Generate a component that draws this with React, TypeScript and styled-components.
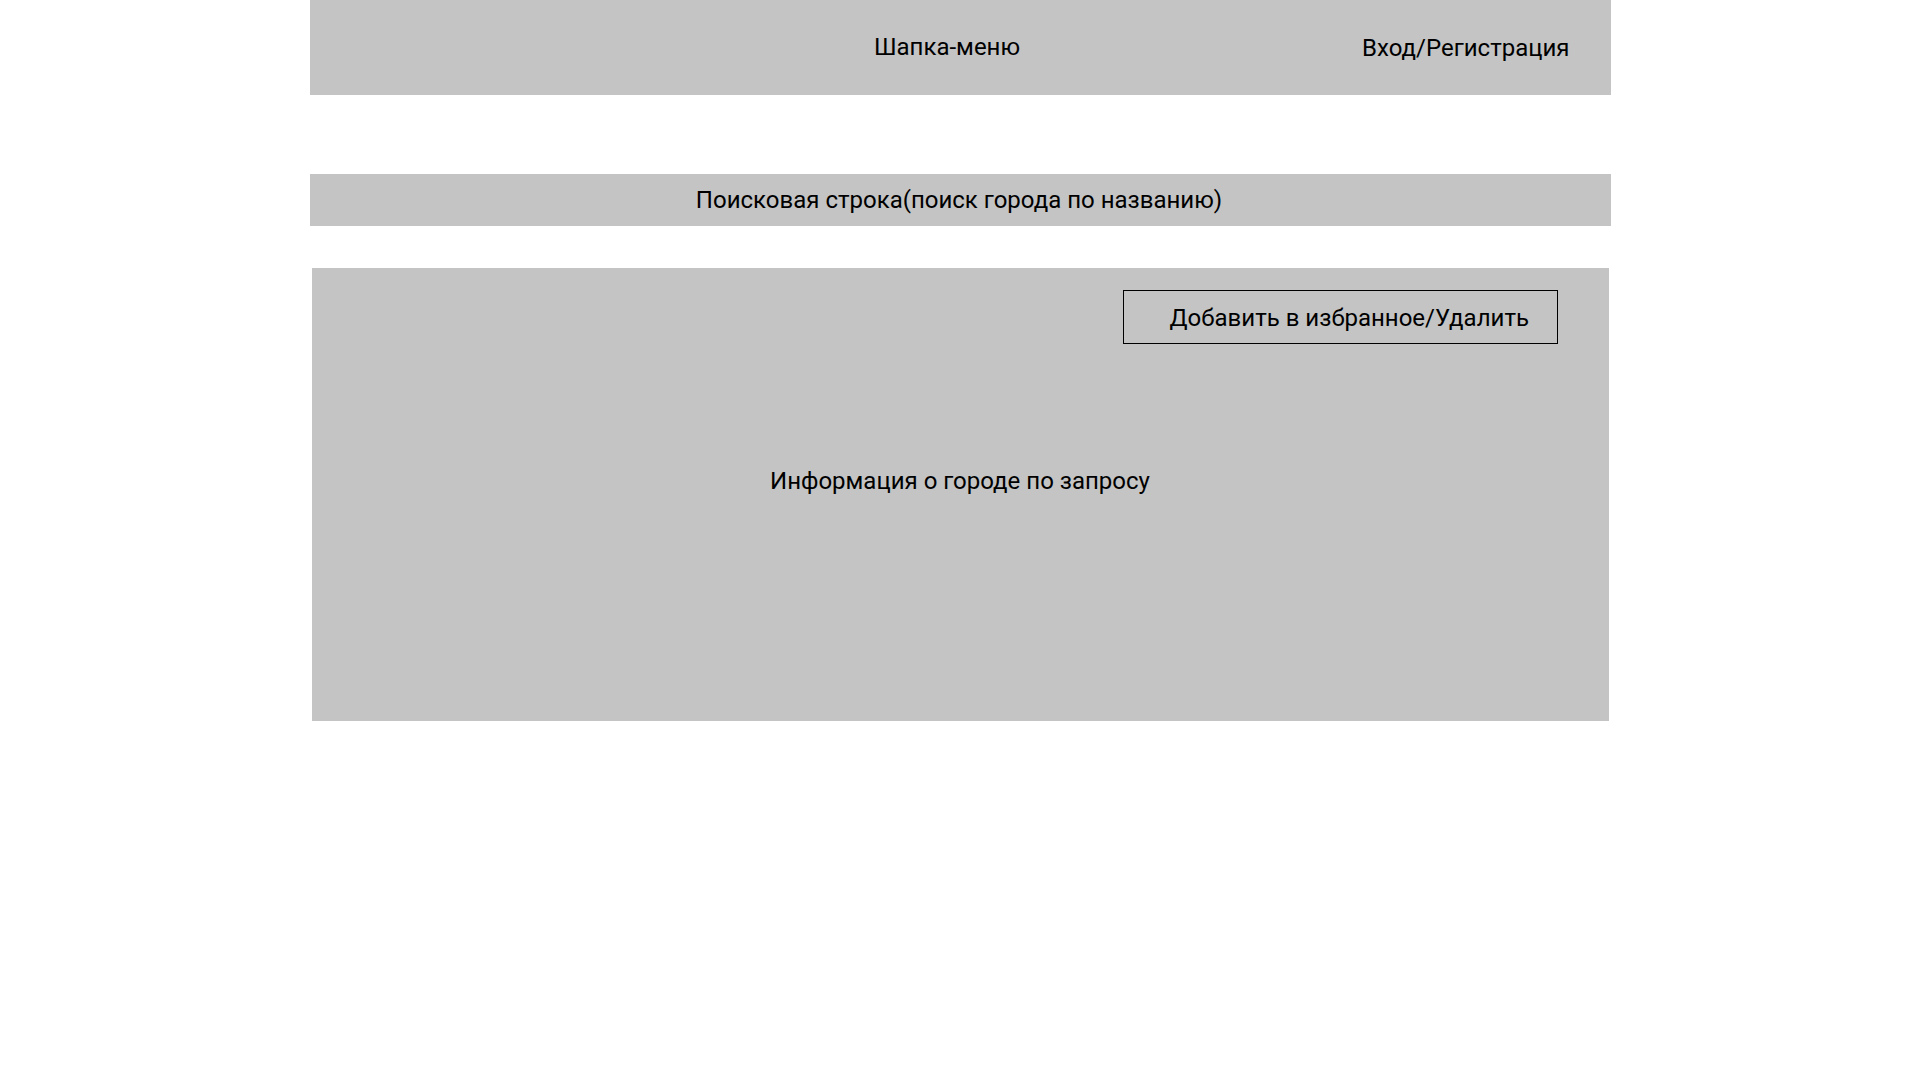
import React from "react";
import styled, { createGlobalStyle } from "styled-components";

const Global = createGlobalStyle`
  html, body { margin: 0; padding: 0; background: #ffffff; }
  body { font-family: Roboto, "Noto Sans", Arial, sans-serif; color: #000; }
`;

const Page = styled.div`
  width: 1301px;
  margin: 0 auto;
  display: flex;
  flex-direction: column;
`;

const Header = styled.header`
  height: 95px;
  background: #c4c4c4;
  display: grid;
  grid-template-columns: 1fr auto 1fr;
  align-items: center;
  padding-right: 26px;
  box-sizing: border-box;
`;

const Title = styled.div`
  grid-column: 2;
  font-size: 24px;
  line-height: 28px;
  margin-top: -2px;
`;

const Login = styled.div`
  grid-column: 3;
  justify-self: end;
  margin-right: 15px;
  font-size: 24px;
  line-height: 28px;
`;

const Search = styled.div`
  margin-top: 79px;
  height: 52px;
  background: #c4c4c4;
  display: flex;
  align-items: center;
  justify-content: center;
  padding-right: 2px;
  font-size: 24px;
  line-height: 28px;
`;

const Info = styled.section`
  margin: 42px 2px 0;
  height: 453px;
  background: #c4c4c4;
  display: flex;
  flex-direction: column;
  align-items: center;
  padding: 22px 51px 0;
  box-sizing: border-box;
`;

const FavButton = styled.div`
  align-self: flex-end;
  width: 435px;
  height: 54px;
  box-sizing: border-box;
  border: 1px solid #000;
  display: flex;
  align-items: center;
  padding-left: 46px;
  padding-top: 2px;
  font-size: 24px;
  line-height: 28px;
`;

const InfoText = styled.div`
  margin-top: 123px;
  font-size: 24px;
  line-height: 28px;
`;

export default function App() {
  return (
    <>
      <Global />
      <Page>
        <Header>
          <Title>Шапка-меню</Title>
          <Login>Вход/Регистрация</Login>
        </Header>
        <Search>Поисковая строка(поиск города по названию)</Search>
        <Info>
          <FavButton>Добавить в избранное/Удалить</FavButton>
          <InfoText>Информация о городе по запросу</InfoText>
        </Info>
      </Page>
    </>
  );
}
